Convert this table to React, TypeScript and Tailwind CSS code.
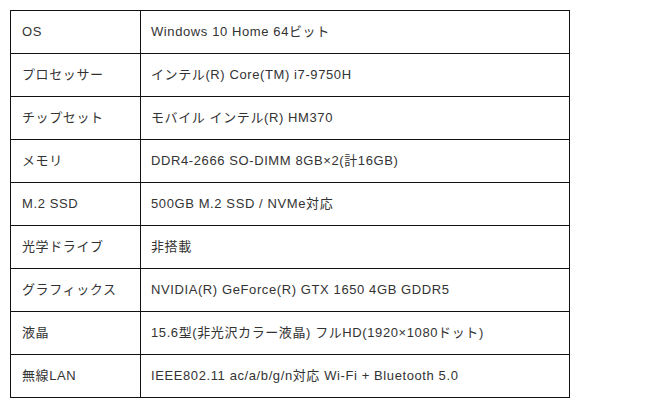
const specs: [string, string][] = [
  ['OS', 'Windows 10 Home 64ビット'],
  ['プロセッサー', 'インテル(R) Core(TM) i7-9750H'],
  ['チップセット', 'モバイル インテル(R) HM370'],
  ['メモリ', 'DDR4-2666 SO-DIMM 8GB×2(計16GB)'],
  ['M.2 SSD', '500GB M.2 SSD / NVMe対応'],
  ['光学ドライブ', '非搭載'],
  ['グラフィックス', 'NVIDIA(R) GeForce(R) GTX 1650 4GB GDDR5'],
  ['液晶', '15.6型(非光沢カラー液晶) フルHD(1920×1080ドット)'],
  ['無線LAN', 'IEEE802.11 ac/a/b/g/n対応 Wi-Fi + Bluetooth 5.0'],
]

export default function App() {
  return (
    <div
      className="bg-white pl-[10px] pt-[10px]"
      style={{ fontFamily: '"Liberation Sans", "Noto Sans CJK JP", sans-serif' }}
    >
      <table className="w-[560px] border-collapse text-[13px] tracking-[0.6px] text-[#333]">
        <tbody>
          {specs.map(([label, value]) => (
            <tr key={label} className="h-[43px]">
              <td className="w-[130px] border border-[#111] px-[11px] align-middle">{label}</td>
              <td className="border border-[#111] px-[10px] align-middle">{value}</td>
            </tr>
          ))}
        </tbody>
      </table>
    </div>
  )
}
